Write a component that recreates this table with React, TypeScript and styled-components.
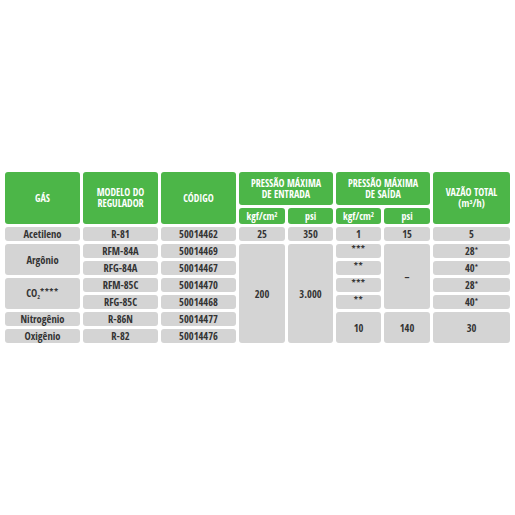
import React from "react";
import styled, { createGlobalStyle } from "styled-components";

const GlobalStyle = createGlobalStyle`
  html, body {
    margin: 0;
    padding: 0;
    background: #ffffff;
  }
  body {
    font-family: "Open Sans Condensed", "Open Sans", "DejaVu Sans Condensed", sans-serif;
    font-stretch: 75%;
  }
`;

interface CellProps {
  col: string;
  row: string;
}

const Page = styled.div`
  width: 515px;
  height: 515px;
  padding: 172px 5px 0 5px;
  box-sizing: border-box;
`;

const Table = styled.div`
  display: grid;
  grid-template-columns: 75px 75px 75px 46px 45px 45px 46px 77px;
  grid-template-rows: 33px 16px repeat(7, 14px);
  gap: 3px;
`;

const HeadCell = styled.div<CellProps>`
  grid-column: ${(p) => p.col};
  grid-row: ${(p) => p.row};
  background: #4cb648;
  color: #ffffff;
  border-radius: 3px;
  display: flex;
  align-items: center;
  justify-content: center;
  text-align: center;
  font-weight: 700;
  font-size: 10px;
  line-height: 11px;
  white-space: nowrap;
`;

const Label = styled.span<{ upper?: boolean }>`
  display: block;
  text-transform: ${(p) => (p.upper ? "uppercase" : "none")};
`;

const SubHead = styled(HeadCell)`
  padding-top: 1px;
`;

const Cell = styled.div<CellProps>`
  grid-column: ${(p) => p.col};
  grid-row: ${(p) => p.row};
  background: #d4d4d4;
  color: #333333;
  border-radius: 3px;
  display: flex;
  align-items: center;
  justify-content: center;
  font-weight: 600;
  font-size: 10.5px;
  line-height: 12px;
  white-space: nowrap;
`;

const Sup = styled.sup`
  font-size: 7px;
  line-height: 0;
  vertical-align: 3px;
`;

const Sub = styled.sub`
  font-size: 6px;
  line-height: 0;
  vertical-align: -2px;
`;

const Stars = styled.span`
  letter-spacing: 0.5px;
  font-size: 9px;
  position: relative;
  top: -2px;
`;

const App: React.FC = () => {
  return (
    <Page>
      <GlobalStyle />
      <Table>
        <HeadCell col="1" row="1 / 3">
          <Label upper>Gás</Label>
        </HeadCell>
        <HeadCell col="2" row="1 / 3">
          <Label upper>
            Modelo do
            <br />
            Regulador
          </Label>
        </HeadCell>
        <HeadCell col="3" row="1 / 3">
          <Label upper>Código</Label>
        </HeadCell>
        <HeadCell col="4 / 6" row="1">
          <Label upper>
            Pressão máxima
            <br />
            de entrada
          </Label>
        </HeadCell>
        <HeadCell col="6 / 8" row="1">
          <Label upper>
            Pressão máxima
            <br />
            de saída
          </Label>
        </HeadCell>
        <HeadCell col="8" row="1 / 3">
          <Label>
            VAZÃO TOTAL
            <br />
            (m³/h)
          </Label>
        </HeadCell>
        <SubHead col="4" row="2">
          <Label>
            kgf/cm<Sup>2</Sup>
          </Label>
        </SubHead>
        <SubHead col="5" row="2">
          <Label>psi</Label>
        </SubHead>
        <SubHead col="6" row="2">
          <Label>
            kgf/cm<Sup>2</Sup>
          </Label>
        </SubHead>
        <SubHead col="7" row="2">
          <Label>psi</Label>
        </SubHead>

        {/* Acetileno */}
        <Cell col="1" row="3">Acetileno</Cell>
        <Cell col="2" row="3">R-81</Cell>
        <Cell col="3" row="3">50014462</Cell>
        <Cell col="4" row="3">25</Cell>
        <Cell col="5" row="3">350</Cell>
        <Cell col="6" row="3">1</Cell>
        <Cell col="7" row="3">15</Cell>
        <Cell col="8" row="3">5</Cell>

        {/* Argônio */}
        <Cell col="1" row="4 / 6">Argônio</Cell>
        <Cell col="2" row="4">RFM-84A</Cell>
        <Cell col="3" row="4">50014469</Cell>
        <Cell col="2" row="5">RFG-84A</Cell>
        <Cell col="3" row="5">50014467</Cell>

        {/* CO2 */}
        <Cell col="1" row="6 / 8">
          <span>
            CO<Sub>2</Sub>
            <Stars>****</Stars>
          </span>
        </Cell>
        <Cell col="2" row="6">RFM-85C</Cell>
        <Cell col="3" row="6">50014470</Cell>
        <Cell col="2" row="7">RFG-85C</Cell>
        <Cell col="3" row="7">50014468</Cell>

        <Cell col="1" row="8">Nitrogênio</Cell>
        <Cell col="2" row="8">R-86N</Cell>
        <Cell col="3" row="8">50014477</Cell>

        <Cell col="1" row="9">Oxigênio</Cell>
        <Cell col="2" row="9">R-82</Cell>
        <Cell col="3" row="9">50014476</Cell>

        <Cell col="4" row="4 / 10">200</Cell>
        <Cell col="5" row="4 / 10">3.000</Cell>

        <Cell col="6" row="4"><Stars>***</Stars></Cell>
        <Cell col="6" row="5"><Stars>**</Stars></Cell>
        <Cell col="6" row="6"><Stars>***</Stars></Cell>
        <Cell col="6" row="7"><Stars>**</Stars></Cell>
        <Cell col="7" row="4 / 8">–</Cell>
        <Cell col="6" row="8 / 10">10</Cell>
        <Cell col="7" row="8 / 10">140</Cell>

        <Cell col="8" row="4"><span>28<Sup>*</Sup></span></Cell>
        <Cell col="8" row="5"><span>40<Sup>*</Sup></span></Cell>
        <Cell col="8" row="6"><span>28<Sup>*</Sup></span></Cell>
        <Cell col="8" row="7"><span>40<Sup>*</Sup></span></Cell>
        <Cell col="8" row="8 / 10">30</Cell>
      </Table>
    </Page>
  );
};

export default App;
